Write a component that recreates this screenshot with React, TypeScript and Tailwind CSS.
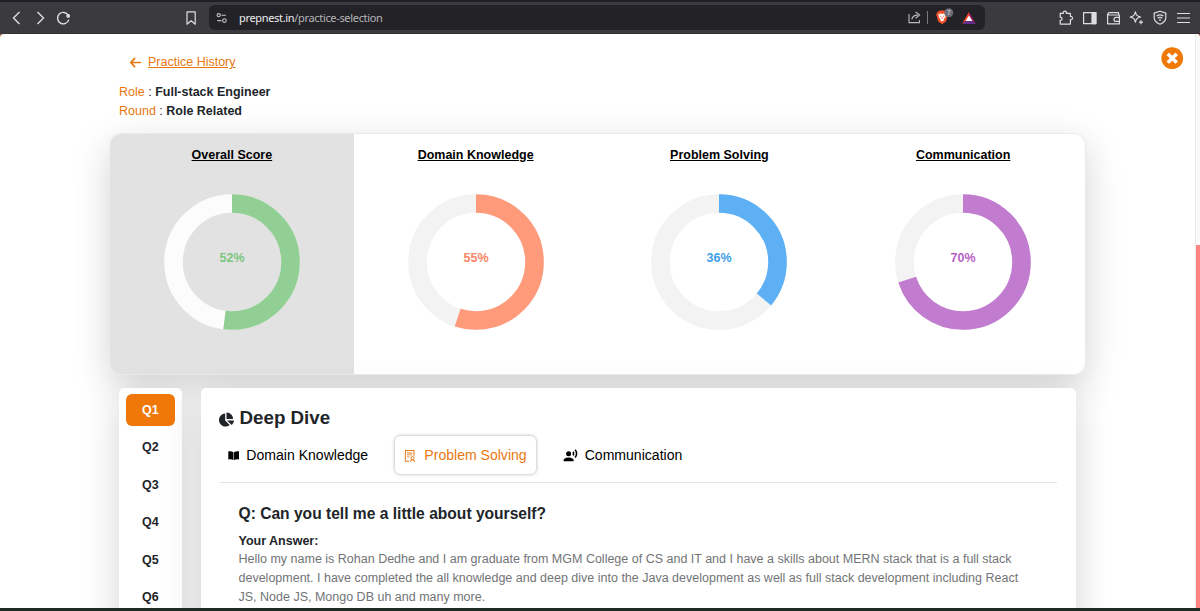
import React, { useState } from "react"
import clsx from "clsx"
import { AiOutlineSolution } from "react-icons/ai"
import { FaChartPie, FaTimesCircle } from "react-icons/fa"
import { FaArrowLeft } from "react-icons/fa6"
import { MdRecordVoiceOver } from "react-icons/md"

interface Score {
    label: string
    value: number
    color: string
    textColor: string
    track: string
}

const scores: Score[] = [
    { label: "Overall Score", value: 52, color: "#92cf94", textColor: "#7cc67f", track: "#fcfcfc" },
    { label: "Domain Knowledge", value: 55, color: "#ff9a7b", textColor: "#fb8565", track: "#f3f3f3" },
    { label: "Problem Solving", value: 36, color: "#5eb0f5", textColor: "#409ee6", track: "#f3f3f3" },
    { label: "Communication", value: 70, color: "#c27ccf", textColor: "#b862c8", track: "#f3f3f3" },
]

const questions = ["Q1", "Q2", "Q3", "Q4", "Q5", "Q6"]

function BookIcon({ className }: { className?: string }) {
    return (
        <svg className={className} viewBox="0 0 12 11" fill="currentColor">
            <path d="M.3 1.2C2.3.8 4.1 1 5.7 2v8.2C4.1 9.4 2.3 9.2.3 9.6zM11.7 1.2C9.7.8 7.9 1 6.3 2v8.2c1.6-.8 3.4-1 5.4-.6z" />
        </svg>
    )
}

const tabs = [
    { label: "Domain Knowledge", icon: BookIcon, width: "w-[157px]", iconSize: "w-[11.5px] h-[11px]" },
    { label: "Problem Solving", icon: AiOutlineSolution, width: "w-[143px]", iconSize: "size-[14px]" },
    { label: "Communication", icon: MdRecordVoiceOver, width: "w-[138px]", iconSize: "size-[15px]" },
]

function Donut({ score }: { score: Score }) {
    const radius = 58.5
    const length = 2 * Math.PI * radius

    return (
        <svg width="136" height="136" viewBox="0 0 136 136">
            <circle cx="68" cy="68" r={radius} fill="none" stroke={score.track} strokeWidth="18.6" />
            <circle
                cx="68"
                cy="68"
                r={radius}
                fill="none"
                stroke={score.color}
                strokeWidth="18.6"
                strokeDasharray={`${(length * score.value) / 100} ${length}`}
                transform="rotate(-90 68 68)"
            />
            <text x="68" y="68" textAnchor="middle" fontSize="12.5" fontWeight="bold" fill={score.textColor}>
                {score.value}%
            </text>
        </svg>
    )
}

function BrowserBar() {
    return (
        <div className="h-[34px] shrink-0 border-t-2 border-b border-t-[#201f25] border-b-[#323136] bg-[#3b3a3f] flex items-center text-[#dedde1]">
            {/* Navigation */}
            <svg className="shrink-0" width="209" height="31" viewBox="0 2 209 31" fill="none" stroke="currentColor" strokeWidth="1.4">
                <path d="M19.5 12 13.5 18l6 6M37.5 12l6 6-6 6" />
                <path d="M68.2 15.2a5.7 5.7 0 1 0 .6 4.4" />
                <circle cx="68.2" cy="15.9" r="1.2" fill="currentColor" />
                <path d="M187 11.8h8.2v12.4l-4.1-3.4-4.1 3.4z" strokeLinejoin="round" strokeWidth="1.2" />
            </svg>

            {/* Address */}
            <div className="w-[776px] h-[25px] rounded-md bg-[#232227] flex items-center">
                <svg className="ml-[7px]" width="12" height="12" viewBox="0 0 12 12" fill="none" stroke="#c3c2c7" strokeWidth="1.1">
                    <circle cx="2.7" cy="3.2" r="1.6" />
                    <path d="M5.5 3.2H10M1.2 8.6h4.2" />
                    <circle cx="8.4" cy="8.6" r="1.8" />
                </svg>
                <span className="ml-[11px] text-[11px] leading-none tracking-[-0.03em] text-[#b5b4b9] font-['Noto_Sans',sans-serif]">
                    <span className="text-[#ececee]">prepnest.in</span>/practice-selection
                </span>
                <svg className="ml-auto mr-[6px]" width="72" height="25" viewBox="907 5 72 25" fill="none">
                    <path d="M909 14v8.6h10.4V20M911.8 19.4c.4-3 2.4-4.3 6-4.3M915.6 12l4 3.1-4 3.1" stroke="#b9b8bd" strokeWidth="1.1" />
                    <path d="M927.5 11v13" stroke="#7b7a80" />
                    <path d="m937.3 12.2 2.2-1.7h5.3l2.2 1.7 1 2.2-2 7.2-3.9 2.7-3.9-2.7-2-7.2z" fill="#f0502a" />
                    <path d="m938.4 14.6 2-1.2 1.7.5 1.7-.5 2 1.2-.7 3.2-1.4 1.3.5.9-2.1 1.5-2.1-1.5.5-.9-1.4-1.3z" fill="#fff" />
                    <path d="m939.8 16 1.4.4M944.4 16l-1.4.4M942.1 17v1.8" stroke="#f0502a" strokeWidth=".8" />
                    <circle cx="948.8" cy="12.8" r="4.5" fill="#6a6b77" />
                    <text x="948.8" y="15.3" textAnchor="middle" fontSize="6.5" fill="#e8e8ec">7</text>
                    <path d="M969 12v6l-7 6z" fill="#ff4724" />
                    <path d="m969 12 7 12-7-6z" fill="#9e1f63" />
                    <path d="M962 24h14l-7-5z" fill="#662d91" />
                    <path d="m969 15.5 3.4 5.5h-6.8z" fill="#fff" />
                </svg>
            </div>

            {/* Toolbar */}
            <svg className="shrink-0" width="215" height="31" viewBox="985 2 215 31" fill="none" stroke="currentColor" strokeWidth="1.2" strokeLinejoin="round">
                <path d="M1060.2 13.3h3.1c-.8-2.8 3.9-2.8 3.1 0h4v3.2c2.8-.6 2.8 3.8 0 3.2v4.4h-10.2v-3.8c2.5.4 2.5-3.5 0-3.1z" />
                <path d="M1083.6 12.6h12v11h-12z" />
                <path d="M1092 12.6h4v11h-4z" fill="currentColor" />
                <path d="M1118.6 15v-2.4h-9.2c-1.9 0-1.9 2.4 0 2.4h10v8.8h-11.8V13.8M1119.4 17.4h-3.4a2 2 0 0 0 0 4h3.4z" />
                <path d="M1135.4 11.8c.8 3.6 1.6 4.4 5.2 5.2-3.6.8-4.4 1.6-5.2 5.2-.8-3.6-1.6-4.4-5.2-5.2 3.6-.8 4.4-1.6 5.2-5.2zM1141 20.2v4M1139 22.2h4" />
                <path d="m1160 11.3 5.8 1.8v4.4c0 3.2-2.2 5.3-5.8 6.8-3.6-1.5-5.8-3.6-5.8-6.8v-4.4zM1156.6 16c2-1.3 4.8-1.3 6.8 0M1157.7 18.1c1.4-.9 3.2-.9 4.6 0M1159 20.2c.7-.4 1.3-.4 2 0" />
                <path d="M1177 13.5h13M1177 18h13M1177 22.5h13" />
            </svg>
        </div>
    )
}

export default function App() {
    const [question, setQuestion] = useState("Q1")
    const [tab, setTab] = useState("Problem Solving")

    return (
        <div className="w-[1200px] h-[611px] overflow-hidden flex flex-col bg-[#a4583a] text-[#212529] text-[12.5px] leading-[18.75px] font-['Liberation_Sans',Arial,sans-serif]">
            <BrowserBar />

            <div className="relative flex-1 min-h-0 overflow-hidden rounded-t-[4px] bg-white flex">
                <main className="w-[1195px] pl-[110px]">
                    {/* Heading */}
                    <div className="h-[99px] pt-[19px]">
                        <a className="ml-[19px] flex items-center text-[#e9770f]">
                            <FaArrowLeft className="size-[13px] mr-[6px]" />
                            <span className="underline">Practice History</span>
                        </a>
                        <div className="ml-[9px] mt-[11px]">
                            <p><span className="text-[#e9770f]">Role</span> : <b>Full-stack Engineer</b></p>
                            <p><span className="text-[#e9770f]">Round</span> : <b>Role Related</b></p>
                        </div>
                    </div>

                    {/* Scores */}
                    <section className="w-[976px] h-[242px] rounded-xl overflow-hidden bg-white border border-l-0 border-black/8 grid grid-cols-4 shadow-[0_12.5px_37.5px_rgba(0,0,0,0.175)]">
                        {scores.map((score, index) => (
                            <div key={score.label} className={clsx("flex flex-col items-center pt-[12px]", index === 0 && "bg-[#e2e2e2]")}>
                                <h3 className="mb-[29px] font-bold underline text-black">{score.label}</h3>
                                <Donut score={score} />
                            </div>
                        ))}
                    </section>

                    <div className="ml-[9px] mt-[13px] flex items-start gap-[19px]">
                        {/* Question list */}
                        <nav className="w-[62.5px] h-[300px] rounded-[5px] bg-white px-[6.5px] pt-[6px] flex flex-col gap-[6px] shadow-[0_12.5px_37.5px_rgba(0,0,0,0.175)]">
                            {questions.map((q) => (
                                <button
                                    key={q}
                                    onClick={() => setQuestion(q)}
                                    className={clsx("h-[31.5px] shrink-0 pt-px rounded-[6px] font-bold", q === question && "bg-[#f07808] text-white")}
                                >
                                    {q}
                                </button>
                            ))}
                        </nav>

                        {/* Deep dive */}
                        <section className="w-[875px] h-[500px] rounded-[5px] bg-white px-[19px] pt-[18px] shadow-[0_12.5px_37.5px_rgba(0,0,0,0.175)]">
                            <h2 className="flex items-center h-[24px] text-[18.75px] font-bold">
                                <FaChartPie className="size-[15px] mr-[6px] mt-[3px] -ml-px" />
                                Deep Dive
                            </h2>
                            <div className="mt-[5px] h-[48px] flex gap-[17px] border-b border-[#e4e4e4]">
                                {tabs.map(({ label, icon: Icon, width, iconSize }) => (
                                    <button
                                        key={label}
                                        onClick={() => setTab(label)}
                                        className={clsx(
                                            "h-[40px] shrink-0 flex items-center justify-center rounded-[7px] text-[14.06px] border-[1.5px]",
                                            width,
                                            tab === label
                                                ? "border-[#dedede] text-[#e9770f] shadow-[0_0_3px_rgba(0,0,0,0.22)]"
                                                : "border-transparent text-black"
                                        )}
                                    >
                                        <Icon className={clsx("mr-[7px] mt-px", iconSize)} />
                                        {label}
                                    </button>
                                ))}
                            </div>
                            <div className="px-[19px] pt-[20.5px]">
                                <h4 className="text-[15.6px] leading-[20px] font-bold">Q: Can you tell me a little about yourself?</h4>
                                <p className="mt-[8px] font-bold">Your Answer:</p>
                                <p className="text-[#727476] whitespace-nowrap">
                                    Hello my name is Rohan Dedhe and I am graduate from MGM College of CS and IT and I have a skills about MERN stack that is a full stack
                                    <br />
                                    development. I have completed the all knowledge and deep dive into the Java development as well as full stack development including React
                                    <br />
                                    JS, Node JS, Mongo DB uh and many more.
                                </p>
                            </div>
                        </section>
                    </div>
                </main>

                {/* Scrollbar */}
                <div className="w-[5px] bg-[#fafafa] border-l border-[#e9e9e9] pt-[211px]">
                    <div className="h-full bg-[#ff8285]" />
                </div>

                <button className="absolute top-[12.5px] right-[17px] text-[#f07808]">
                    <FaTimesCircle className="size-[22.5px]" />
                </button>
            </div>

            <div className="h-[3px] shrink-0 bg-[#1d2b24]" />
        </div>
    )
}
